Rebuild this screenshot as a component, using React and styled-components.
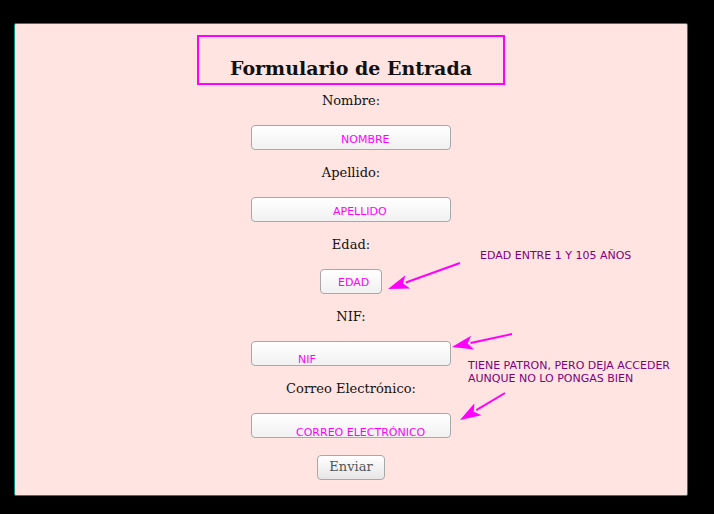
import React from 'react';
import styled, { createGlobalStyle } from 'styled-components';

const GlobalStyle = createGlobalStyle`
  html, body {
    margin: 0;
    padding: 0;
    background: #000;
  }
`;

const Page = styled.div`
  padding: 23px 26px 18px 14px;
`;

const Panel = styled.form`
  position: relative;
  box-sizing: border-box;
  width: 674px;
  height: 473px;
  background: #ffe4e1;
  border: 1px solid #008b8b;
  border-radius: 2px;
  display: flex;
  flex-direction: column;
  align-items: center;
  padding-top: 11px;
  font-family: 'DejaVu Serif', serif;
  color: #111;
`;

const TitleBox = styled.div`
  box-sizing: border-box;
  width: 308px;
  height: 50px;
  border: 2px solid #ff00ff;
  display: flex;
  align-items: flex-end;
  justify-content: center;
  padding-bottom: 3px;
  margin-bottom: 7px;
`;

const Title = styled.h1`
  margin: 0;
  font-size: 19px;
  font-weight: bold;
  line-height: 24px;
`;

const Label = styled.label`
  font-size: 13px;
  line-height: 18px;
  margin-bottom: 15px;
`;

const Input = styled.input`
  box-sizing: border-box;
  width: ${({ $width }) => $width}px;
  height: 25px;
  margin-bottom: 14px;
  border: 1px solid #a8a8a8;
  border-radius: 4px;
  background: linear-gradient(#ffffff, #f1f1f1);
  font-family: 'DejaVu Sans', sans-serif;
  font-size: 11px;
  padding: ${({ $drop }) => $drop}px 0 0 ${({ $indent }) => $indent}px;
  outline: none;

  &::placeholder {
    color: #ff00ff;
    opacity: 1;
  }
`;

const Submit = styled.button`
  box-sizing: border-box;
  width: 68px;
  height: 25px;
  margin-top: 3px;
  border: 1px solid #a8a8a8;
  border-radius: 4px;
  background: linear-gradient(#ffffff, #e6e6e6);
  font-family: 'DejaVu Serif', serif;
  font-size: 13px;
  line-height: 20px;
  color: #555;
  padding: 0 0 2px;
`;

const Note = styled.div`
  position: absolute;
  left: ${({ $x }) => $x}px;
  top: ${({ $y }) => $y}px;
  font-family: 'DejaVu Sans', sans-serif;
  font-size: 11px;
  line-height: 13px;
  color: #800080;
  white-space: nowrap;
`;

const Arrows = styled.svg`
  position: absolute;
  left: -15px;
  top: -24px;
  pointer-events: none;
`;

const Arrow = ({ from, to }) => {
  const [x1, y1] = from;
  const [x2, y2] = to;
  const dx = x2 - x1;
  const dy = y2 - y1;
  const len = Math.hypot(dx, dy);
  const ux = dx / len;
  const uy = dy / len;
  const headLen = 21;
  const headW = 7;
  const bx = x2 - ux * headLen;
  const by = y2 - uy * headLen;
  const p1 = `${bx - uy * headW},${by + ux * headW}`;
  const p2 = `${bx + uy * headW},${by - ux * headW}`;
  return (
    <g>
      <line x1={x1} y1={y1} x2={bx + ux * 2} y2={by + uy * 2} stroke="#ff00ff" strokeWidth="2" />
      <polygon points={`${x2},${y2} ${p1} ${bx + ux * 5},${by + uy * 5} ${p2}`} fill="#ff00ff" />
    </g>
  );
};

const fields = [
  { label: 'Nombre:', ph: 'NOMBRE', width: 200, indent: 89, drop: 3 },
  { label: 'Apellido:', ph: 'APELLIDO', width: 200, indent: 81, drop: 4 },
  { label: 'Edad:', ph: 'EDAD', width: 62, indent: 17, drop: 2 },
  { label: 'NIF:', ph: 'NIF', width: 200, indent: 46, drop: 12 },
  { label: 'Correo Electrónico:', ph: 'CORREO ELECTRÓNICO', width: 200, indent: 44, drop: 13 },
];

const App = () => (
  <Page>
    <GlobalStyle />
    <Panel onSubmit={(e) => e.preventDefault()}>
      <TitleBox>
        <Title>Formulario de Entrada</Title>
      </TitleBox>
      {fields.map((f) => (
        <React.Fragment key={f.ph}>
          <Label>{f.label}</Label>
          <Input placeholder={f.ph} $width={f.width} $indent={f.indent} $drop={f.drop} />
        </React.Fragment>
      ))}
      <Submit type="submit">Enviar</Submit>

      <Note $x={465} $y={225}>EDAD ENTRE 1 Y 105 AÑOS</Note>
      <Note $x={453} $y={335}>
        TIENE PATRON, PERO DEJA ACCEDER
        <br />
        AUNQUE NO LO PONGAS BIEN
      </Note>

      <Arrows width="714" height="514">
        <Arrow from={[460, 263]} to={[388, 289]} />
        <Arrow from={[512, 334]} to={[452, 347]} />
        <Arrow from={[505, 393]} to={[460, 420]} />
      </Arrows>
    </Panel>
  </Page>
);

export default App;
